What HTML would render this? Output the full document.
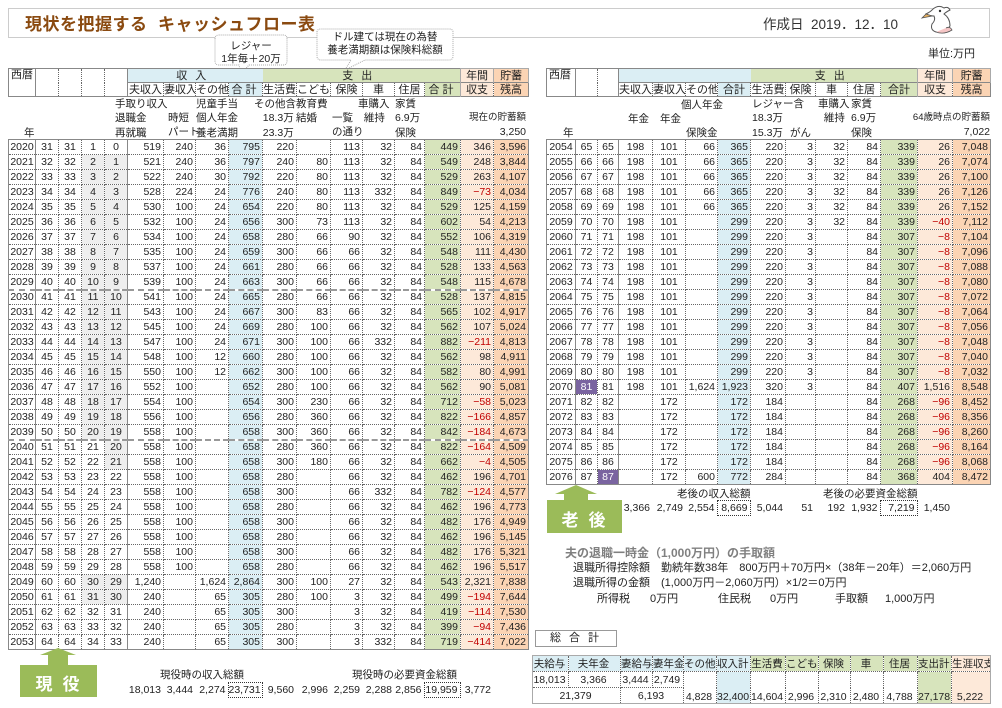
<!DOCTYPE html>
<html><head><meta charset="utf-8">
<style>
*{margin:0;padding:0;box-sizing:border-box}
body{width:1002px;height:708px;background:#fff;position:relative;overflow:hidden;font-family:"Liberation Sans","Noto Sans CJK JP",sans-serif;color:#222}
.a{position:absolute;white-space:nowrap}
table{border-collapse:collapse;table-layout:fixed;position:absolute;font-size:10.5px}
td{border:1px dotted #666;padding:0 2px 0 0;text-align:right;white-space:nowrap;overflow:hidden;line-height:12px}
.dt{border:1.5px solid #888}
.dt tr{height:15px}
.dt td:nth-child(-n+5){text-align:center;padding:0}
.dt td:nth-child(1){border-right:1px solid #888}
.L td:nth-child(5){border-right:1px solid #888}
.R td:nth-child(3){border-right:1px solid #888}
.n{color:#c00000}
.gr{background:#eeeeee}
.p{background:#7a64a0;color:#fff}
tr.d td{border-bottom:2px dashed #999}
.hd{border:1.5px solid #888;font-size:11px}
.hd tr{height:14px}
.hd td{text-align:center;padding:0}
.bl{background:#dbeef4}.gn{background:#d7e4bc}.o1{background:#fde9d9}.o2{background:#fbd4b4}
.nt{font-size:10.5px}
.sm td{border:none;font-size:10.5px}
.bx{border:1px dotted #333 !important}
.tot{border:1.5px solid #aaa;font-size:10.5px}
.tot tr{height:16px}
.tot td{text-align:center}
</style></head><body>

<!-- title box -->
<div class="a" style="left:8px;top:8px;width:982px;height:30px;border:1px solid #ccc"></div>
<div class="a" style="left:25px;top:10px;font-size:17px;font-weight:bold;color:#8a4a10;letter-spacing:0.5px">現状を把握する&nbsp;&nbsp;キャッシュフロー表</div>
<div class="a" style="left:763px;top:13px;font-size:13.5px;color:#333">作成日&nbsp;&nbsp;2019．12．10</div>
<svg class="a" style="left:920px;top:2px" width="42" height="34" viewBox="0 0 42 34">
<path d="M12 8 Q18 2 24 6 Q28 4 30 8 Q26 10 24 12 Q30 16 30 24 Q26 30 16 30 Q10 28 12 22 Q16 18 14 14 Q10 14 6 12 Q10 10 12 8Z" fill="#fff" stroke="#555" stroke-width="1"/>
<path d="M6 12 L2 16 L12 14Z" fill="#e8b060" stroke="#555" stroke-width=".8"/>
<circle cx="20" cy="9" r="1.2" fill="#333"/>
<path d="M16 30 Q24 33 32 28 Q30 24 26 26" fill="#f5c5c5" stroke="#555" stroke-width=".8"/>
</svg>
<div class="a" style="left:928px;top:45px;font-size:11px">単位:万円</div>

<!-- callouts -->
<svg class="a" style="left:205px;top:28px" width="260" height="50">
<path d="M10 11 Q10 7 14 7 L78 7 Q82 7 82 11 L82 33 Q82 37 78 37 L44 37 L36 46 L34 37 L14 37 Q10 37 10 33Z" fill="#fff" stroke="#aaa" stroke-dasharray="1,1"/>
<path d="M112 4 Q112 1 116 1 L244 1 Q248 1 248 4 L248 28 Q248 32 244 32 L160 32 L140 42 L146 32 L116 32 Q112 32 112 28Z" fill="#fff" stroke="#aaa" stroke-dasharray="1,1"/>
</svg>
<div class="a" style="left:215px;top:40px;width:72px;text-align:center;font-size:10.5px;line-height:13px">レジャー<br>1年毎＋20万</div>
<div class="a" style="left:317px;top:31px;width:136px;text-align:center;font-size:10.5px;line-height:13px">ドル建ては現在の為替<br>養老満期額は保険料総額</div>

<!-- LEFT HEADER -->
<table class="hd" style="left:8px;top:68px;width:520px">
<colgroup><col style="width:27px"><col style="width:23px"><col style="width:23px"><col style="width:23px"><col style="width:23px"><col style="width:36px"><col style="width:32px"><col style="width:33px"><col style="width:34px"><col style="width:34px"><col style="width:34px"><col style="width:32px"><col style="width:32px"><col style="width:30px"><col style="width:36px"><col style="width:33px"><col style="width:35px"></colgroup>
<tr><td rowspan="2" style="text-align:left;vertical-align:top;padding-left:2px;border-right:1px solid #888">西暦</td><td rowspan="2"></td><td rowspan="2"></td><td rowspan="2"></td><td rowspan="2" style="border-right:1px solid #888"></td>
<td colspan="4" class="bl" style="border:none;letter-spacing:8px">収入</td><td colspan="6" class="gn" style="border:none;letter-spacing:8px">支出</td><td class="o1" style="border:1px solid #aaa;border-bottom:none">年間</td><td class="o2" style="border:1px solid #aaa;border-bottom:none">貯蓄</td></tr>
<tr style="border-top:1px solid #888"><td>夫収入</td><td>妻収入</td><td>その他</td><td class="bl" style="letter-spacing:3px">合計</td><td>生活費</td><td>こども</td><td>保険</td><td>車</td><td>住居</td><td class="gn" style="letter-spacing:3px">合計</td><td class="o1" style="border-top:none;border-left:1px solid #aaa">収支</td><td class="o2" style="border-top:none">残高</td></tr>
</table>

<!-- left notes -->
<div class="a nt" style="left:115px;top:97px;line-height:14.3px">手取り収入<br>退職金<br>再就職</div>
<div class="a nt" style="left:168px;top:111px;line-height:14.3px">時短<br>パート</div>
<div class="a nt" style="left:196px;top:97px;line-height:14.3px">児童手当<br>個人年金<br>養老満期</div>
<div class="a nt" style="left:254px;top:97px;line-height:14.3px">その他含<br>&nbsp;&nbsp;&nbsp;18.3万<br>&nbsp;&nbsp;&nbsp;23.3万</div>
<div class="a nt" style="left:296px;top:97px;line-height:14.3px">教育費<br>結婚</div>
<div class="a nt" style="left:332px;top:111px;line-height:14.3px">一覧<br>の通り</div>
<div class="a nt" style="left:358px;top:97px;line-height:14.3px">車購入<br>&nbsp;&nbsp;維持</div>
<div class="a nt" style="left:395px;top:97px;line-height:14.3px">家賃<br>6.9万<br>保険</div>
<div class="a nt" style="left:24px;top:125px">年</div>
<div class="a nt" style="left:420px;top:111px;width:106px;text-align:right;line-height:14.3px;font-size:9.5px">現在の貯蓄額<br><span style="font-size:10.5px">3,250</span></div>

<!-- LEFT DATA -->
<table class="dt L" style="left:8px;top:139px;width:520px">
<colgroup><col style="width:27px"><col style="width:23px"><col style="width:23px"><col style="width:23px"><col style="width:23px"><col style="width:36px"><col style="width:32px"><col style="width:33px"><col style="width:34px;background:#dbeef4"><col style="width:34px"><col style="width:34px"><col style="width:32px"><col style="width:32px"><col style="width:30px"><col style="width:36px;background:#d7e4bc"><col style="width:33px;background:#fde9d9"><col style="width:35px;background:#fbd4b4"></colgroup>
<tr><td>2020<td>31<td>31<td>1<td>0<td>519<td>240<td>36<td>795<td>220<td><td>113<td>32<td>84<td>449<td>346<td>3,596</tr>
<tr><td>2021<td>32<td>32<td class=gr>2<td class=gr>1<td>521<td>240<td>36<td>797<td>240<td>80<td>113<td>32<td>84<td>549<td>248<td>3,844</tr>
<tr><td>2022<td>33<td>33<td class=gr>3<td class=gr>2<td>522<td>240<td>30<td>792<td>220<td>80<td>113<td>32<td>84<td>529<td>263<td>4,107</tr>
<tr><td>2023<td>34<td>34<td class=gr>4<td class=gr>3<td>528<td>224<td>24<td>776<td>240<td>80<td>113<td>332<td>84<td>849<td class=n>−73<td>4,034</tr>
<tr><td>2024<td>35<td>35<td class=gr>5<td class=gr>4<td>530<td>100<td>24<td>654<td>220<td>80<td>113<td>32<td>84<td>529<td>125<td>4,159</tr>
<tr><td>2025<td>36<td>36<td class=gr>6<td class=gr>5<td>532<td>100<td>24<td>656<td>300<td>73<td>113<td>32<td>84<td>602<td>54<td>4,213</tr>
<tr><td>2026<td>37<td>37<td class=gr>7<td class=gr>6<td>534<td>100<td>24<td>658<td>280<td>66<td>90<td>32<td>84<td>552<td>106<td>4,319</tr>
<tr><td>2027<td>38<td>38<td class=gr>8<td class=gr>7<td>535<td>100<td>24<td>659<td>300<td>66<td>66<td>32<td>84<td>548<td>111<td>4,430</tr>
<tr><td>2028<td>39<td>39<td class=gr>9<td class=gr>8<td>537<td>100<td>24<td>661<td>280<td>66<td>66<td>32<td>84<td>528<td>133<td>4,563</tr>
<tr class=d><td>2029<td>40<td>40<td class=gr>10<td class=gr>9<td>539<td>100<td>24<td>663<td>300<td>66<td>66<td>32<td>84<td>548<td>115<td>4,678</tr>
<tr><td>2030<td>41<td>41<td class=gr>11<td class=gr>10<td>541<td>100<td>24<td>665<td>280<td>66<td>66<td>32<td>84<td>528<td>137<td>4,815</tr>
<tr><td>2031<td>42<td>42<td class=gr>12<td class=gr>11<td>543<td>100<td>24<td>667<td>300<td>83<td>66<td>32<td>84<td>565<td>102<td>4,917</tr>
<tr><td>2032<td>43<td>43<td class=gr>13<td class=gr>12<td>545<td>100<td>24<td>669<td>280<td>100<td>66<td>32<td>84<td>562<td>107<td>5,024</tr>
<tr><td>2033<td>44<td>44<td class=gr>14<td class=gr>13<td>547<td>100<td>24<td>671<td>300<td>100<td>66<td>332<td>84<td>882<td class=n>−211<td>4,813</tr>
<tr><td>2034<td>45<td>45<td class=gr>15<td class=gr>14<td>548<td>100<td>12<td>660<td>280<td>100<td>66<td>32<td>84<td>562<td>98<td>4,911</tr>
<tr><td>2035<td>46<td>46<td class=gr>16<td class=gr>15<td>550<td>100<td>12<td>662<td>300<td>100<td>66<td>32<td>84<td>582<td>80<td>4,991</tr>
<tr><td>2036<td>47<td>47<td class=gr>17<td class=gr>16<td>552<td>100<td><td>652<td>280<td>100<td>66<td>32<td>84<td>562<td>90<td>5,081</tr>
<tr><td>2037<td>48<td>48<td class=gr>18<td class=gr>17<td>554<td>100<td><td>654<td>300<td>230<td>66<td>32<td>84<td>712<td class=n>−58<td>5,023</tr>
<tr><td>2038<td>49<td>49<td class=gr>19<td class=gr>18<td>556<td>100<td><td>656<td>280<td>360<td>66<td>32<td>84<td>822<td class=n>−166<td>4,857</tr>
<tr class=d><td>2039<td>50<td>50<td class=gr>20<td class=gr>19<td>558<td>100<td><td>658<td>300<td>360<td>66<td>32<td>84<td>842<td class=n>−184<td>4,673</tr>
<tr><td>2040<td>51<td>51<td>21<td class=gr>20<td>558<td>100<td><td>658<td>280<td>360<td>66<td>32<td>84<td>822<td class=n>−164<td>4,509</tr>
<tr><td>2041<td>52<td>52<td>22<td class=gr>21<td>558<td>100<td><td>658<td>300<td>180<td>66<td>32<td>84<td>662<td class=n>−4<td>4,505</tr>
<tr><td>2042<td>53<td>53<td>23<td>22<td>558<td>100<td><td>658<td>280<td><td>66<td>32<td>84<td>462<td>196<td>4,701</tr>
<tr><td>2043<td>54<td>54<td>24<td>23<td>558<td>100<td><td>658<td>300<td><td>66<td>332<td>84<td>782<td class=n>−124<td>4,577</tr>
<tr><td>2044<td>55<td>55<td>25<td>24<td>558<td>100<td><td>658<td>280<td><td>66<td>32<td>84<td>462<td>196<td>4,773</tr>
<tr><td>2045<td>56<td>56<td>26<td>25<td>558<td>100<td><td>658<td>300<td><td>66<td>32<td>84<td>482<td>176<td>4,949</tr>
<tr><td>2046<td>57<td>57<td>27<td>26<td>558<td>100<td><td>658<td>280<td><td>66<td>32<td>84<td>462<td>196<td>5,145</tr>
<tr><td>2047<td>58<td>58<td>28<td>27<td>558<td>100<td><td>658<td>300<td><td>66<td>32<td>84<td>482<td>176<td>5,321</tr>
<tr><td>2048<td>59<td>59<td>29<td>28<td>558<td>100<td><td>658<td>280<td><td>66<td>32<td>84<td>462<td>196<td>5,517</tr>
<tr><td>2049<td>60<td>60<td class=gr>30<td class=gr>29<td>1,240<td><td>1,624<td>2,864<td>300<td>100<td>27<td>32<td>84<td>543<td>2,321<td>7,838</tr>
<tr><td>2050<td>61<td>61<td class=gr>31<td class=gr>30<td>240<td><td>65<td>305<td>280<td>100<td>3<td>32<td>84<td>499<td class=n>−194<td>7,644</tr>
<tr><td>2051<td>62<td>62<td>32<td>31<td>240<td><td>65<td>305<td>300<td><td>3<td>32<td>84<td>419<td class=n>−114<td>7,530</tr>
<tr><td>2052<td>63<td>63<td>33<td>32<td>240<td><td>65<td>305<td>280<td><td>3<td>32<td>84<td>399<td class=n>−94<td>7,436</tr>
<tr><td>2053<td>64<td>64<td>34<td>33<td>240<td><td>65<td>305<td>300<td><td>3<td>332<td>84<td>719<td class=n>−414<td>7,022</tr>
</table>

<!-- left bottom summary -->
<svg class="a" style="left:20px;top:648px" width="80" height="50">
<path d="M20 7 L38 0 L56 7 L48 7 L48 17 L28 17 L28 7Z" fill="#9bbb59"/>
<rect x="0" y="17" width="77" height="32" fill="#9bbb59"/>
</svg>
<div class="a" style="left:20px;top:670px;width:77px;text-align:center;color:#fff;font-weight:bold;font-size:17px;letter-spacing:10px;padding-left:8px">現役</div>
<div class="a" style="left:160px;top:667px;font-size:10.5px">現役時の収入総額</div>
<div class="a" style="left:352px;top:667px;font-size:10.5px">現役時の必要資金総額</div>
<table class="sm" style="left:8px;top:682px;width:520px">
<colgroup><col style="width:27px"><col style="width:23px"><col style="width:23px"><col style="width:23px"><col style="width:23px"><col style="width:36px"><col style="width:32px"><col style="width:33px"><col style="width:34px"><col style="width:34px"><col style="width:34px"><col style="width:32px"><col style="width:32px"><col style="width:30px"><col style="width:36px"><col style="width:33px"><col style="width:35px"></colgroup>
<tr style="height:15px"><td><td><td><td><td><td>18,013<td>3,444<td>2,274<td class=bx>23,731<td>9,560<td>2,996<td>2,259<td>2,288<td>2,856<td class=bx>19,959<td>3,772<td></tr>
</table>

<!-- RIGHT HEADER -->
<table class="hd" style="left:546px;top:68px;width:444px">
<colgroup><col style="width:29px"><col style="width:22px"><col style="width:21px"><col style="width:34px"><col style="width:33px"><col style="width:32px"><col style="width:33px"><col style="width:35px"><col style="width:30px"><col style="width:32px"><col style="width:33px"><col style="width:37px"><col style="width:35px"><col style="width:38px"></colgroup>
<tr><td rowspan="2" style="text-align:left;vertical-align:top;padding-left:2px;border-right:1px solid #888">西暦</td><td rowspan="2"></td><td rowspan="2" style="border-right:1px solid #888"></td>
<td colspan="4" class="bl" style="border:none"></td><td colspan="5" class="gn" style="border:none;letter-spacing:8px">支出</td><td class="o1" style="border:1px solid #aaa;border-bottom:none">年間</td><td class="o2" style="border:1px solid #aaa;border-bottom:none">貯蓄</td></tr>
<tr style="border-top:1px solid #888"><td>夫収入</td><td>妻収入</td><td>その他</td><td class="bl">合計</td><td>生活費</td><td>保険</td><td>車</td><td>住居</td><td class="gn">合計</td><td class="o1" style="border-top:none;border-left:1px solid #aaa">収支</td><td class="o2" style="border-top:none">残高</td></tr>
</table>

<!-- right notes -->
<div class="a nt" style="left:681px;top:97px">個人年金</div>
<div class="a nt" style="left:628px;top:111px">年金</div>
<div class="a nt" style="left:660px;top:111px">年金</div>
<div class="a nt" style="left:686px;top:125px">保険金</div>
<div class="a nt" style="left:752px;top:97px;line-height:14.3px">レジャー含<br>18.3万<br>15.3万</div>
<div class="a nt" style="left:790px;top:125px">がん</div>
<div class="a nt" style="left:818px;top:97px;line-height:14.3px">車購入<br>&nbsp;&nbsp;維持</div>
<div class="a nt" style="left:851px;top:97px;line-height:14.3px">家賃<br>6.9万<br>保険</div>
<div class="a nt" style="left:563px;top:125px">年</div>
<div class="a nt" style="left:880px;top:111px;width:110px;text-align:right;line-height:14.3px;font-size:9.5px">64歳時点の貯蓄額<br><span style="font-size:10.5px">7,022</span></div>

<!-- RIGHT DATA -->
<table class="dt R" style="left:546px;top:139px;width:444px">
<colgroup><col style="width:29px"><col style="width:22px"><col style="width:21px"><col style="width:34px"><col style="width:33px"><col style="width:32px"><col style="width:33px;background:#dbeef4"><col style="width:35px"><col style="width:30px"><col style="width:32px"><col style="width:33px"><col style="width:37px;background:#d7e4bc"><col style="width:35px;background:#fde9d9"><col style="width:38px;background:#fbd4b4"></colgroup>
<tr><td>2054<td>65<td>65<td>198<td>101<td>66<td>365<td>220<td>3<td>32<td>84<td>339<td>26<td>7,048</tr>
<tr><td>2055<td>66<td>66<td>198<td>101<td>66<td>365<td>220<td>3<td>32<td>84<td>339<td>26<td>7,074</tr>
<tr><td>2056<td>67<td>67<td>198<td>101<td>66<td>365<td>220<td>3<td>32<td>84<td>339<td>26<td>7,100</tr>
<tr><td>2057<td>68<td>68<td>198<td>101<td>66<td>365<td>220<td>3<td>32<td>84<td>339<td>26<td>7,126</tr>
<tr><td>2058<td>69<td>69<td>198<td>101<td>66<td>365<td>220<td>3<td>32<td>84<td>339<td>26<td>7,152</tr>
<tr><td>2059<td>70<td>70<td>198<td>101<td><td>299<td>220<td>3<td>32<td>84<td>339<td class=n>−40<td>7,112</tr>
<tr><td>2060<td>71<td>71<td>198<td>101<td><td>299<td>220<td>3<td><td>84<td>307<td class=n>−8<td>7,104</tr>
<tr><td>2061<td>72<td>72<td>198<td>101<td><td>299<td>220<td>3<td><td>84<td>307<td class=n>−8<td>7,096</tr>
<tr><td>2062<td>73<td>73<td>198<td>101<td><td>299<td>220<td>3<td><td>84<td>307<td class=n>−8<td>7,088</tr>
<tr><td>2063<td>74<td>74<td>198<td>101<td><td>299<td>220<td>3<td><td>84<td>307<td class=n>−8<td>7,080</tr>
<tr><td>2064<td>75<td>75<td>198<td>101<td><td>299<td>220<td>3<td><td>84<td>307<td class=n>−8<td>7,072</tr>
<tr><td>2065<td>76<td>76<td>198<td>101<td><td>299<td>220<td>3<td><td>84<td>307<td class=n>−8<td>7,064</tr>
<tr><td>2066<td>77<td>77<td>198<td>101<td><td>299<td>220<td>3<td><td>84<td>307<td class=n>−8<td>7,056</tr>
<tr><td>2067<td>78<td>78<td>198<td>101<td><td>299<td>220<td>3<td><td>84<td>307<td class=n>−8<td>7,048</tr>
<tr><td>2068<td>79<td>79<td>198<td>101<td><td>299<td>220<td>3<td><td>84<td>307<td class=n>−8<td>7,040</tr>
<tr><td>2069<td>80<td>80<td>198<td>101<td><td>299<td>220<td>3<td><td>84<td>307<td class=n>−8<td>7,032</tr>
<tr><td>2070<td class=p>81<td>81<td>198<td>101<td>1,624<td>1,923<td>320<td>3<td><td>84<td>407<td>1,516<td>8,548</tr>
<tr><td>2071<td>82<td>82<td><td>172<td><td>172<td>184<td><td><td>84<td>268<td class=n>−96<td>8,452</tr>
<tr><td>2072<td>83<td>83<td><td>172<td><td>172<td>184<td><td><td>84<td>268<td class=n>−96<td>8,356</tr>
<tr><td>2073<td>84<td>84<td><td>172<td><td>172<td>184<td><td><td>84<td>268<td class=n>−96<td>8,260</tr>
<tr><td>2074<td>85<td>85<td><td>172<td><td>172<td>184<td><td><td>84<td>268<td class=n>−96<td>8,164</tr>
<tr><td>2075<td>86<td>86<td><td>172<td><td>172<td>184<td><td><td>84<td>268<td class=n>−96<td>8,068</tr>
<tr><td>2076<td>87<td class=p>87<td><td>172<td>600<td>772<td>284<td><td><td>84<td>368<td>404<td>8,472</tr>
</table>

<!-- right summary -->
<svg class="a" style="left:547px;top:485px" width="80" height="50">
<path d="M8 9 L29 0 L50 9 L41 9 L41 15 L17 15 L17 9Z" fill="#9bbb59"/>
<rect x="0" y="15" width="75" height="33" fill="#9bbb59"/>
</svg>
<div class="a" style="left:547px;top:506px;width:75px;text-align:center;color:#fff;font-weight:bold;font-size:17px;letter-spacing:10px;padding-left:8px">老後</div>
<div class="a" style="left:677px;top:486px;font-size:10.5px">老後の収入総額</div>
<div class="a" style="left:823px;top:486px;font-size:10.5px">老後の必要資金総額</div>
<table class="sm" style="left:546px;top:500px;width:444px">
<colgroup><col style="width:29px"><col style="width:22px"><col style="width:21px"><col style="width:34px"><col style="width:33px"><col style="width:32px"><col style="width:33px"><col style="width:35px"><col style="width:30px"><col style="width:32px"><col style="width:33px"><col style="width:37px"><col style="width:35px"><col style="width:38px"></colgroup>
<tr style="height:15px"><td><td><td><td>3,366<td>2,749<td>2,554<td class=bx>8,669<td>5,044<td>51<td>192<td>1,932<td class=bx>7,219<td>1,450<td></tr>
</table>

<div class="a" style="left:565px;top:544px;font-size:12px;font-weight:bold;color:#808080">夫の退職一時金（1,000万円）の手取額</div>
<div class="a" style="left:573px;top:559px;font-size:11px">退職所得控除額　勤続年数38年　800万円＋70万円×（38年－20年）＝2,060万円</div>
<div class="a" style="left:573px;top:574px;font-size:11px">退職所得の金額　(1,000万円－2,060万円）×1/2＝0万円</div>
<div class="a" style="left:597px;top:590px;font-size:11px">所得税</div>
<div class="a" style="left:650px;top:590px;font-size:11px">0万円</div>
<div class="a" style="left:718px;top:590px;font-size:11px">住民税</div>
<div class="a" style="left:770px;top:590px;font-size:11px">0万円</div>
<div class="a" style="left:835px;top:590px;font-size:11px">手取額</div>
<div class="a" style="left:885px;top:590px;font-size:11px">1,000万円</div>

<div class="a" style="left:535px;top:630px;width:82px;height:17px;border:1px solid #999;font-size:11px;padding-left:14px;line-height:15px;letter-spacing:8px">総合計</div>

<table class="tot" style="left:532px;top:655px;width:458px">
<colgroup><col style="width:36px"><col style="width:52px"><col style="width:32px"><col style="width:31px"><col style="width:33px"><col style="width:34px;background:#dbeef4"><col style="width:35px"><col style="width:33px"><col style="width:32px"><col style="width:33px"><col style="width:34px"><col style="width:34px;background:#d7e4bc"><col style="width:39px"></colgroup>
<tr><td class=bl>夫給与<td class=bl>夫年金<td class=bl>妻給与<td class=bl>妻年金<td class=bl>その他<td>収入計<td class=gn>生活費<td class=gn>こども<td class=gn>保険<td class=gn>車<td class=gn>住居<td>支出計<td class=o1 style="padding:0">生涯収支</tr>
<tr><td>18,013<td>3,366<td>3,444<td>2,749<td rowspan=2 style="vertical-align:bottom">4,828<td rowspan=2 style="vertical-align:bottom">32,400<td rowspan=2 style="vertical-align:bottom">14,604<td rowspan=2 style="vertical-align:bottom">2,996<td rowspan=2 style="vertical-align:bottom">2,310<td rowspan=2 style="vertical-align:bottom">2,480<td rowspan=2 style="vertical-align:bottom">4,788<td rowspan=2 style="vertical-align:bottom">27,178<td rowspan=2 class=o1 style="vertical-align:bottom">5,222</tr>
<tr><td colspan=2>21,379<td colspan=2>6,193</tr>
</table>

</body></html>
